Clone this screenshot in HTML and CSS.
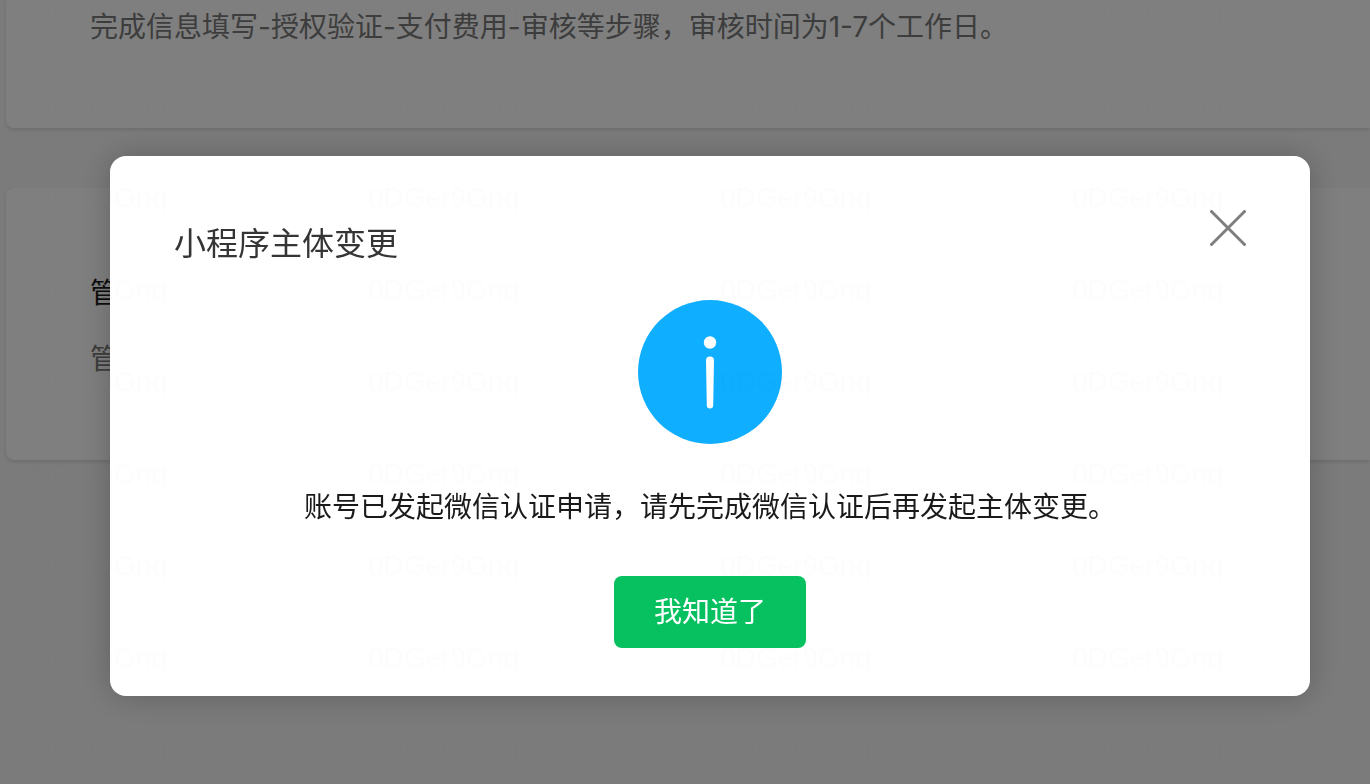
FILE: index.html
```
<!DOCTYPE html>
<html lang="zh-CN">
<head>
    <meta charset="UTF-8">
    <meta name="viewport" content="width=device-width, initial-scale=1.0">
    <title>小程序主体变更</title>
    <link rel="stylesheet" href="styles.css">
</head>
<body>
    <main class="page">
        <section class="card card-top">
            <p class="card-text">完成信息填写-授权验证-支付费用-审核等步骤，审核时间为1-7个工作日。</p>
        </section>
        <section class="card">
            <h2 class="card-title">管</h2>
            <p class="card-text">管</p>
        </section>
    </main>

    <div class="overlay">
        <div class="dialog" role="dialog" aria-modal="true" aria-labelledby="dialogTitle">
            <div class="dialog-header">
                <h1 class="dialog-title" id="dialogTitle">小程序主体变更</h1>
                <button class="close-button" type="button" aria-label="关闭">
                    <svg width="36" height="36" viewBox="0 0 36 36" fill="none" stroke="#7f7f7f" stroke-width="3" stroke-linecap="round">
                        <path d="M1.5 1.5l33 33M34.5 1.5l-33 33"/>
                    </svg>
                </button>
            </div>
            <div class="dialog-body">
                <svg class="info-icon" width="144" height="144" viewBox="0 0 144 144" aria-hidden="true">
                    <circle cx="72" cy="72" r="72" fill="#10aeff"/>
                    <circle cx="72" cy="42.5" r="6.2" fill="#fff"/>
                    <path d="M68 60.5a4 4 0 0 1 8 0l-.8 44.8a3.2 3.2 0 0 1-6.4 0z" fill="#fff"/>
                </svg>
                <p class="dialog-text">账号已发起微信认证申请，请先完成微信认证后再发起主体变更。</p>
                <button class="confirm-button" type="button">我知道了</button>
            </div>
        </div>
    </div>

    <!-- account watermark, laid over everything -->
    <div class="watermark" aria-hidden="true">
        <span>0DGer9Gnq</span><span>0DGer9Gnq</span><span>0DGer9Gnq</span><span>0DGer9Gnq</span>
        <span>0DGer9Gnq</span><span>0DGer9Gnq</span><span>0DGer9Gnq</span><span>0DGer9Gnq</span>
        <span>0DGer9Gnq</span><span>0DGer9Gnq</span><span>0DGer9Gnq</span><span>0DGer9Gnq</span>
        <span>0DGer9Gnq</span><span>0DGer9Gnq</span><span>0DGer9Gnq</span><span>0DGer9Gnq</span>
        <span>0DGer9Gnq</span><span>0DGer9Gnq</span><span>0DGer9Gnq</span><span>0DGer9Gnq</span>
        <span>0DGer9Gnq</span><span>0DGer9Gnq</span><span>0DGer9Gnq</span><span>0DGer9Gnq</span>
        <span>0DGer9Gnq</span><span>0DGer9Gnq</span><span>0DGer9Gnq</span><span>0DGer9Gnq</span>
        <span>0DGer9Gnq</span><span>0DGer9Gnq</span><span>0DGer9Gnq</span><span>0DGer9Gnq</span>
        <span>0DGer9Gnq</span><span>0DGer9Gnq</span><span>0DGer9Gnq</span><span>0DGer9Gnq</span>
    </div>
</body>
</html>
```
FILE: styles.css
```
* {
    box-sizing: border-box;
}

body {
    margin: 0;
    background-color: #f7f7f7;
    font-family: Inter, "Noto Sans CJK SC", sans-serif;
    font-size: 28px;
    line-height: 42px;
}

h1, h2, p {
    margin: 0;
    font-weight: 400;
}

.page {
    padding-left: 6px;
}

.card {
    margin-bottom: 60px;
    padding: 84px 84px 80px;
    background-color: #fff;
    border-radius: 8px 0 0 8px;
    box-shadow: 0 2px 4px rgba(0, 0, 0, 0.12);
}

.card-top {
    padding-top: 6px;
    border-radius: 0 0 0 8px;
}

.card-title {
    margin-bottom: 24px;
    color: #1a1a1a;
    font-size: 28px;
}

.card-text {
    color: #7a7a7a;
}

.overlay {
    position: fixed;
    inset: 0;
    display: flex;
    align-items: flex-start;
    padding: 156px 60px 0 110px;
    background-color: rgba(0, 0, 0, 0.5);
}

.dialog {
    flex: 1;
    padding: 54px 64px 48px;
    background-color: #fff;
    border-radius: 16px;
    box-shadow: 0 0 32px rgba(0, 0, 0, 0.22);
}

.dialog-header {
    display: flex;
    justify-content: space-between;
    align-items: flex-start;
}

.dialog-title {
    padding-top: 10px;
    color: #353535;
    font-size: 32px;
    line-height: 48px;
}

.close-button {
    padding: 0;
    border: none;
    background: none;
    cursor: pointer;
}

.close-button svg {
    display: block;
}

.dialog-body {
    display: flex;
    flex-direction: column;
    align-items: center;
    padding-top: 32px;
}

.dialog-text {
    margin: 42px 0 48px;
    color: #1a1a1a;
}

.confirm-button {
    width: 192px;
    height: 72px;
    padding: 0;
    border: none;
    border-radius: 8px;
    background-color: #07c160;
    color: #fff;
    font: inherit;
    cursor: pointer;
}

.watermark {
    position: fixed;
    inset: 0;
    display: grid;
    grid-template-columns: repeat(4, 352px);
    grid-auto-rows: 92px;
    align-content: start;
    padding-left: 16px;
    overflow: hidden;
    color: rgba(0, 0, 0, 0.012);
    font-family: "Liberation Sans", sans-serif;
    line-height: 28px;
    pointer-events: none;
}
```
